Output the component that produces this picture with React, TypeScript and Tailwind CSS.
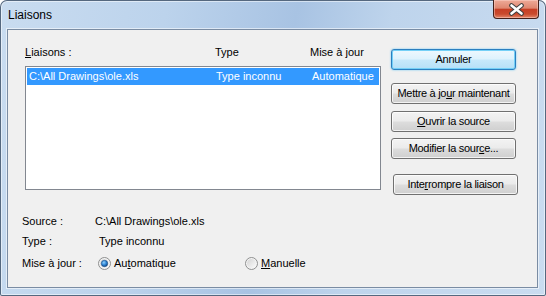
import type { ReactNode } from "react";

// Win7 style push button
function Btn({
  children,
  isDefault = false,
  className = "",
}: {
  children: ReactNode;
  isDefault?: boolean;
  className?: string;
}) {
  return (
    <button
      className={`h-[21px] w-[125px] rounded-[3px] border text-[11px] leading-[13px] tracking-[-0.3px] text-black flex items-center justify-center ${
        isDefault
          ? "border-[#2b7fc0] bg-[linear-gradient(to_bottom,#eef8fe_0%,#ddf2fd_48%,#c7e9fb_52%,#b5e0f7_100%)] shadow-[inset_0_0_0_1px_#74d0f7,0_0_2px_#5cc2f2]"
          : "border-[#707070] bg-[linear-gradient(to_bottom,#f3f3f3_0%,#ebebeb_48%,#dddddd_52%,#cfcfcf_100%)] shadow-[inset_0_0_0_1px_rgba(255,255,255,0.75)]"
      } ${className}`}
    >
      {children}
    </button>
  );
}

function Radio({ checked }: { checked: boolean }) {
  return (
    <svg width="13" height="13" viewBox="0 0 13 13" className="shrink-0">
      <defs>
        <linearGradient id={checked ? "rgOn" : "rgOff"} x1="0" y1="0" x2="1" y2="1">
          <stop offset="0" stopColor="#d4d4d4" />
          <stop offset="1" stopColor="#fbfbfb" />
        </linearGradient>
        <radialGradient id="dot" cx="0.4" cy="0.35" r="0.7">
          <stop offset="0" stopColor="#8fd0fb" />
          <stop offset="0.55" stopColor="#2c83d4" />
          <stop offset="1" stopColor="#123f78" />
        </radialGradient>
      </defs>
      <circle cx="6.5" cy="6.5" r="6" fill="#f4f4f4" stroke="#8e8f8f" strokeWidth="1" />
      <circle cx="6.5" cy="6.5" r="4.5" fill={`url(#${checked ? "rgOn" : "rgOff"})`} />
      {checked && <circle cx="6.5" cy="6.5" r="3.2" fill="url(#dot)" stroke="#194d85" strokeWidth="0.6" />}
    </svg>
  );
}

export default function App() {
  return (
    <div className="w-[546px] h-[296px] bg-white font-['Liberation_Sans',Arial,sans-serif] text-black">
      <div className="w-[546px] h-[296px] flex flex-col rounded-t-[7px] rounded-b-[2px] bg-[linear-gradient(100deg,#c9dcf0_0%,#bcd3ec_28%,#a8c3e3_50%,#bed4ec_66%,#cadcf0_100%)] shadow-[inset_0_0_0_1px_#55687f,inset_0_0_0_2px_rgba(255,255,255,0.5)]">
        {/* title bar */}
        <div className="h-[29px] flex items-start justify-between">
          <span className="mt-[8px] ml-[8px] text-[12px] leading-[14px]">Liaisons</span>
          <div className="mr-[7px] w-[46px] h-[19px] rounded-b-[4px] border border-t-0 border-[#43201a] bg-[linear-gradient(to_bottom,#eeaa98_0%,#df8770_45%,#c73f25_52%,#c94a2d_78%,#e4876a_100%)] shadow-[inset_0_0_0_1px_rgba(255,220,210,0.45)] flex items-center justify-center">
            <svg width="17" height="13" viewBox="0 0 17 13">
              <path d="M3.5 2.5 L13.5 10.5 M13.5 2.5 L3.5 10.5" stroke="#3e3e3e" strokeWidth="4.6" strokeLinecap="round" />
              <path d="M3.5 2.5 L13.5 10.5 M13.5 2.5 L3.5 10.5" stroke="#ffffff" strokeWidth="2.6" strokeLinecap="round" />
            </svg>
          </div>
        </div>

        {/* client area */}
        <div className="ml-[7px] mr-[8px] h-[259px] bg-[#f0f0f0] border border-[#7a8ca3] shadow-[0_0_0_1px_rgba(255,255,255,0.55)] text-[11px] leading-[13px]">
          <div className="flex items-start pl-[17px]">
            {/* links list */}
            <div className="mt-[16px] w-[356px]">
              <div className="flex h-[13px]">
                <span className="w-[190px]">
                  <u>L</u>iaisons :
                </span>
                <span className="w-[95px]">Type</span>
                <span>Mise à jour</span>
              </div>
              <div className="mt-[7px] h-[124px] border border-[#828790] bg-white p-[1px]">
                <div className="h-[17px] bg-[#3399ff] text-white flex items-center">
                  <span className="w-[189px] pl-[2px]">C:\All Drawings\ole.xls</span>
                  <span className="w-[96px]">Type inconnu</span>
                  <span>Automatique</span>
                </div>
              </div>
            </div>

            {/* buttons */}
            <div className="ml-[10px] mt-[19px] flex flex-col">
              <Btn isDefault>Annuler</Btn>
              <Btn className="mt-[13px]">
                Mettre à jo<u>u</u>r maintenant
              </Btn>
              <Btn className="mt-[7px]">
                <u>O</u>uvrir la source
              </Btn>
              <Btn className="mt-[6px]">
                Modifier la sour<u>c</u>e...
              </Btn>
              <Btn className="mt-[15px] ml-[2px]">
                Inte<u>r</u>rompre la liaison
              </Btn>
            </div>
          </div>

          {/* details */}
          <div className="mt-[20px] pl-[14px]">
            <div className="flex h-[13px]">
              <span className="w-[73px]">Source :</span>
              <span>C:\All Drawings\ole.xls</span>
            </div>
            <div className="flex h-[13px] mt-[7px]">
              <span className="w-[77px]">Type :</span>
              <span>Type inconnu</span>
            </div>
            <div className="flex items-center h-[13px] mt-[9px]">
              <span className="w-[76px]">Mise à jour :</span>
              <label className="w-[147px] flex items-center gap-[3px]">
                <Radio checked />
                <span>
                  Au<u>t</u>omatique
                </span>
              </label>
              <label className="flex items-center gap-[3px]">
                <Radio checked={false} />
                <span>
                  <u>M</u>anuelle
                </span>
              </label>
            </div>
          </div>
        </div>
      </div>
    </div>
  );
}
